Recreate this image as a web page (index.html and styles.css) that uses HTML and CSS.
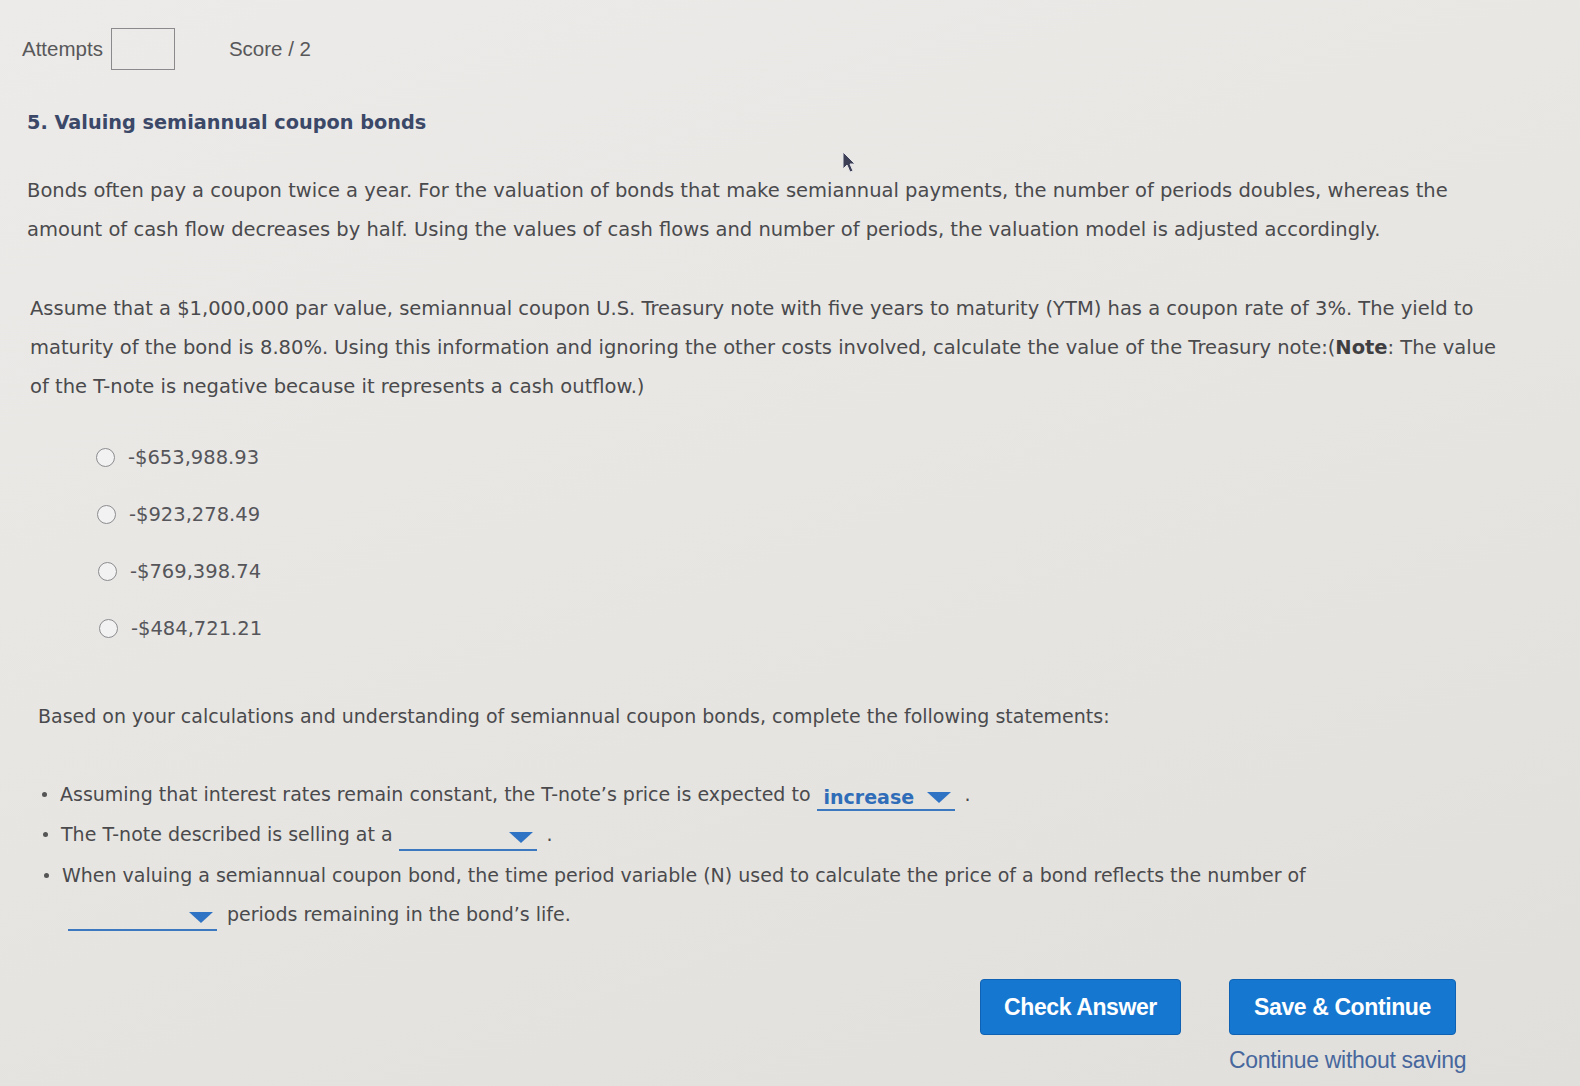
FILE: index.html
```html
<!DOCTYPE html>
<html lang="en">
<head>
<meta charset="utf-8">
<title>Valuing semiannual coupon bonds</title>
<link rel="stylesheet" href="styles.css">
</head>
<body>
<div class="page">
  <div class="topbar">
    <span class="label">Attempts</span>
    <span class="attempts-box"></span>
    <span class="score">Score / 2</span>
  </div>

  <h1 class="title">5. Valuing semiannual coupon bonds</h1>

  <p class="para p1">Bonds often pay a coupon twice a year. For the valuation of bonds that make semiannual payments, the number of periods doubles, whereas the<br>amount of cash flow decreases by half. Using the values of cash flows and number of periods, the valuation model is adjusted accordingly.</p>

  <p class="para p2">Assume that a $1,000,000 par value, semiannual coupon U.S. Treasury note with five years to maturity (YTM) has a coupon rate of 3%. The yield to<br>maturity of the bond is 8.80%. Using this information and ignoring the other costs involved, calculate the value of the Treasury note:(<b>Note</b>: The value<br>of the T-note is negative because it represents a cash outflow.)</p>

  <ul class="options">
    <li class="option o1"><span class="radio"></span>-$653,988.93</li>
    <li class="option o2"><span class="radio"></span>-$923,278.49</li>
    <li class="option o3"><span class="radio"></span>-$769,398.74</li>
    <li class="option o4"><span class="radio"></span>-$484,721.21</li>
  </ul>

  <p class="para based">Based on your calculations and understanding of semiannual coupon bonds, complete the following statements:</p>

  <ul class="statements">
    <li class="st s1"><span class="bullet"></span>Assuming that interest rates remain constant, the T-note’s price is expected to <span class="dd dd1"><span class="dd-val">increase</span><span class="arrow"></span></span> .</li>
    <li class="st s2"><span class="bullet"></span>The T-note described is selling at a <span class="dd dd2"><span class="dd-val"></span><span class="arrow"></span></span> .</li>
    <li class="st s3"><span class="bullet"></span>When valuing a semiannual coupon bond, the time period variable (N) used to calculate the price of a bond reflects the number of</li>
    <li class="st s4"><span class="dd dd3"><span class="dd-val"></span><span class="arrow"></span></span> periods remaining in the bond’s life.</li>
  </ul>

  <div class="actions">
    <button class="btn check">Check Answer</button>
    <div class="save-col">
      <button class="btn save">Save &amp; Continue</button>
      <a class="skip">Continue without saving</a>
    </div>
  </div>
</div>
<div class="cursor">
  <svg width="16" height="24" viewBox="0 0 16 24"><path d="M2 1 L2 18 L6 14 L9 21 L12 20 L9 13 L14 13 Z" fill="#3c3f55" stroke="#e6e6ea" stroke-width="1"/></svg>
</div>
</body>
</html>
```

FILE: styles.css
```css
html, body {
  margin: 0;
  padding: 0;
}
body {
  width: 1580px;
  height: 1086px;
  overflow: hidden;
  background: linear-gradient(160deg, #ecebe9 0%, #e7e6e3 45%, #e1dfdb 100%);
  font-family: "DejaVu Sans", Verdana, sans-serif;
  color: #4a4a4d;
  position: relative;
}
.page {
  padding: 28px 0 0 0;
}
.topbar {
  display: flex;
  align-items: center;
  padding-left: 22px;
  height: 42px;
  font-family: "Liberation Sans", Arial, sans-serif;
  font-size: 20.5px;
  color: #58585a;
}
.attempts-box {
  width: 64px;
  height: 42px;
  border: 1px solid #8a8a8c;
  margin-left: 8px;
  box-sizing: border-box;
}
.score {
  margin-left: 54px;
}
.title {
  margin: 41px 0 0 27px;
  font-size: 19.3px;
  font-weight: bold;
  color: #3b4868;
  line-height: 24px;
}
.para {
  margin: 0;
  font-size: 19.5px;
  line-height: 39px;
  white-space: nowrap;
}
.para b { color: #3f3f42; }
.p1 {
  margin: 36px 0 0 27px;
}
.p2 {
  margin: 40px 0 0 30px;
}
.options {
  list-style: none;
  margin: 23px 0 0 0;
  padding: 0;
}
.option {
  display: flex;
  align-items: center;
  height: 57px;
  font-size: 19.5px;
  color: #55555a;
}
.o1 { padding-left: 96px; }
.o2 { padding-left: 97px; }
.o3 { padding-left: 98px; }
.o4 { padding-left: 99px; }
.radio {
  width: 19px;
  height: 19px;
  border: 1.5px solid #8c8c90;
  border-radius: 50%;
  background: #f2f2f2;
  margin-right: 13px;
  box-sizing: border-box;
}
.based {
  margin: 40px 0 0 38px;
  font-size: 19px;
}
.statements {
  list-style: none;
  margin: 38px 0 0 0;
  padding: 0;
  font-size: 19px;
}
.st {
  display: flex;
  align-items: center;
  white-space: nowrap;
  height: 40px;
}
.s1 { padding-left: 42px; }
.s2 { padding-left: 43px; }
.s3 { padding-left: 44px; height: 42px; }
.s4 { padding-left: 68px; height: 36px; }
.bullet {
  width: 5px;
  height: 5px;
  background: #555;
  border-radius: 50%;
  margin-right: 13px;
}
.dd {
  display: inline-flex;
  align-items: center;
  justify-content: space-between;
  width: 138px;
  height: 26px;
  border-bottom: 2px solid #3b78c0;
  margin: 8px 10px 0 6px;
  padding: 0 4px 0 7px;
  box-sizing: border-box;
}
.dd-val {
  color: #2f6db8;
  font-weight: bold;
}
.arrow {
  width: 0;
  height: 0;
  border-left: 12px solid transparent;
  border-right: 12px solid transparent;
  border-top: 11px solid #2f74c4;
}
.dd3 {
  width: 149px;
  margin: 8px 10px 0 0;
}
.actions {
  display: flex;
  align-items: flex-start;
  margin: 47px 0 0 980px;
  gap: 48px;
}
.btn {
  background: #1677d0;
  color: #ffffff;
  border: 1px solid #0f62b3;
  border-radius: 4px;
  font-family: "Liberation Sans", Arial, sans-serif;
  font-weight: bold;
  font-size: 23px;
  letter-spacing: -0.4px;
  height: 56px;
  padding: 0;
}
.check { width: 201px; }
.save { width: 227px; }
.save-col {
  display: flex;
  flex-direction: column;
  align-items: flex-start;
}
.skip {
  margin-top: 12px;
  font-family: "Liberation Sans", Arial, sans-serif;
  font-size: 23px;
  color: #47679d;
  letter-spacing: -0.3px;
}
.cursor {
  position: absolute;
  left: 841px;
  top: 151px;
}
```
